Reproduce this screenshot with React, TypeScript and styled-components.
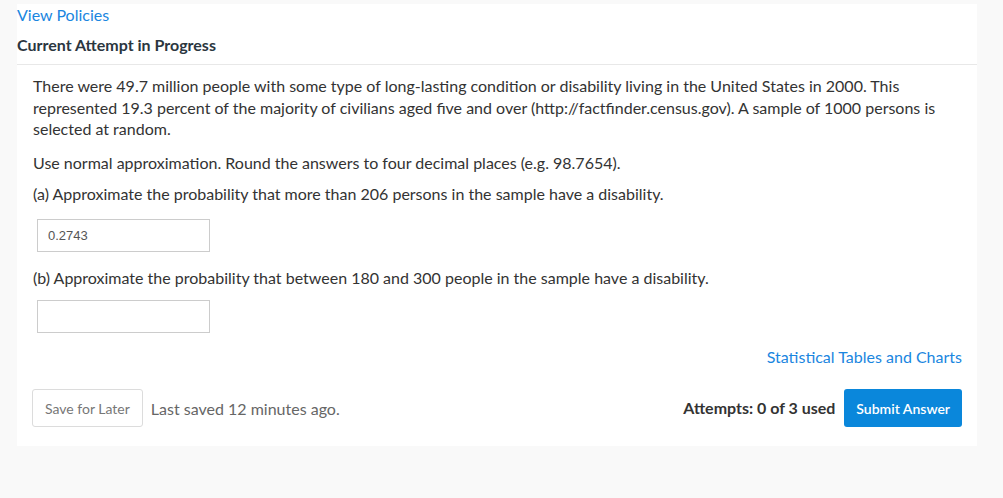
import React from "react";
import styled, { createGlobalStyle } from "styled-components";

const Global = createGlobalStyle`
  html, body { margin: 0; padding: 0; background: #f9f9f9; }
  body { font-family: Lato, "Noto Sans", Arial, sans-serif; color: #333; }
  * { box-sizing: border-box; }
`;

const Card = styled.div`
  margin: 4px 0 0 17px;
  width: 960px;
  background: #fff;
  padding-bottom: 19px;
`;

const Header = styled.div`
  padding: 1px 0 0 0;
  border-bottom: 1px solid #e8e8e8;
  height: 61px;
`;

const PolicyLink = styled.a`
  display: block;
  font-size: 16px;
  line-height: 20px;
  color: #1a86e0;
  text-decoration: none;
`;

const Title = styled.div`
  margin-top: 10px;
  font-size: 16px;
  line-height: 20px;
  font-weight: 700;
  color: #2b3640;
`;

const Content = styled.div`
  padding: 10px 15px 0 16px;
`;

const Para = styled.p<{ $gap?: number }>`
  margin: 0 0 ${(p) => p.$gap ?? 11}px 0;
  font-size: 16px;
  line-height: 21.5px;
  color: #333;
`;

const AnswerInput = styled.input<{ $gap?: number }>`
  display: block;
  margin: 0 0 ${(p) => p.$gap ?? 15}px 4px;
  width: 173px;
  height: 33px;
  border: 1px solid #ccc;
  border-radius: 0;
  padding: 0 10px;
  font-family: "Liberation Sans", Arial, sans-serif;
  font-size: 13px;
  color: #555;
  outline: none;
`;

const LinkRow = styled.div`
  display: flex;
  justify-content: flex-end;
`;

const TablesLink = styled.a`
  font-size: 16px;
  line-height: 22px;
  color: #1a86e0;
  text-decoration: none;
`;

const Footer = styled.div`
  display: flex;
  align-items: center;
  margin-top: 21px;
  margin-left: -1px;
`;

const SaveButton = styled.button`
  height: 38px;
  padding: 0 12px;
  border: 1px solid #dcdcdc;
  border-radius: 3px;
  background: #fff;
  font-family: Lato, sans-serif;
  font-size: 14px;
  color: #777;
`;

const SavedText = styled.span`
  margin-left: 8px;
  font-size: 16px;
  color: #666;
`;

const Spacer = styled.div`
  flex: 1;
`;

const Attempts = styled.span`
  font-size: 16px;
  font-weight: 700;
  color: #333;
  margin-right: 9px;
  margin-top: -2px;
`;

const SubmitButton = styled.button`
  height: 38px;
  padding: 0 12px;
  border: none;
  border-radius: 3px;
  background: #0a87db;
  font-family: Lato, sans-serif;
  font-size: 14px;
  font-weight: 600;
  color: #fff;
`;

export default function App() {
  return (
    <>
      <Global />
      <Card>
        <Header>
          <PolicyLink href="#">View Policies</PolicyLink>
          <Title>Current Attempt in Progress</Title>
        </Header>
        <Content>
          <Para $gap={12}>
            There were 49.7 million people with some type of long-lasting condition or disability living in the United States in 2000. This
            represented 19.3 percent of the majority of civilians aged five and over (http://factfinder.census.gov). A sample of 1000 persons is
            selected at random.
          </Para>
          <Para $gap={10}>Use normal approximation. Round the answers to four decimal places (e.g. 98.7654).</Para>
          <Para $gap={14}>(a) Approximate the probability that more than 206 persons in the sample have a disability.</Para>
          <AnswerInput defaultValue="0.2743" />
          <Para $gap={12}>(b) Approximate the probability that between 180 and 300 people in the sample have a disability.</Para>
          <AnswerInput defaultValue="" $gap={13} />
          <LinkRow>
            <TablesLink href="#">Statistical Tables and Charts</TablesLink>
          </LinkRow>
          <Footer>
            <SaveButton>Save for Later</SaveButton>
            <SavedText>Last saved 12 minutes ago.</SavedText>
            <Spacer />
            <Attempts>Attempts: 0 of 3 used</Attempts>
            <SubmitButton>Submit Answer</SubmitButton>
          </Footer>
        </Content>
      </Card>
    </>
  );
}
